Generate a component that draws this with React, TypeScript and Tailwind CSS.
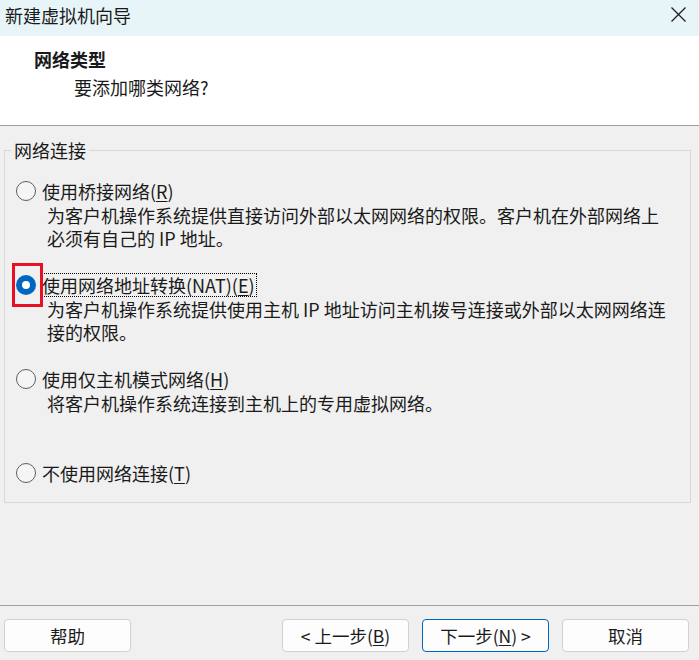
import { useState } from "react";

type Option = {
  id: string;
  label: string;
  key: string;
  desc: string[];
};

const options: Option[] = [
  {
    id: "bridge",
    label: "使用桥接网络",
    key: "R",
    desc: ["为客户机操作系统提供直接访问外部以太网网络的权限。客户机在外部网络上", "必须有自己的 IP 地址。"],
  },
  {
    id: "nat",
    label: "使用网络地址转换(NAT)",
    key: "E",
    desc: ["为客户机操作系统提供使用主机 IP 地址访问主机拨号连接或外部以太网网络连", "接的权限。"],
  },
  {
    id: "host",
    label: "使用仅主机模式网络",
    key: "H",
    desc: ["将客户机操作系统连接到主机上的专用虚拟网络。"],
  },
  { id: "none", label: "不使用网络连接", key: "T", desc: [] },
];

function Radio({ checked }: { checked: boolean }) {
  if (checked) {
    return (
      <span className="flex h-[20px] w-[20px] shrink-0 items-center justify-center rounded-full bg-[#0067c0]">
        <span className="h-[8px] w-[8px] rounded-full bg-white" />
      </span>
    );
  }
  return <span className="h-[20px] w-[20px] shrink-0 rounded-full border border-[#5f5f5f] bg-[#f5f5f5]" />;
}

function Btn({ children, primary }: { children: React.ReactNode; primary?: boolean }) {
  return (
    <button
      type="button"
      className={`h-[33px] w-[127px] rounded-[4px] border bg-[#fdfdfd] text-[17.5px] leading-[23px] text-[#1b1b1b] ${
        primary ? "border-[#0067c0]" : "border-[#d0d0d0]"
      }`}
    >
      {children}
    </button>
  );
}

export default function App() {
  const [selected, setSelected] = useState("nat");

  return (
    <div
      className="flex h-[660px] w-[699px] flex-col bg-[#f0f0f0] text-[#1a1a1a]"
      style={{ fontFamily: '"Noto Sans CJK SC", "Noto Sans", sans-serif' }}
    >
      <div className="flex h-[36px] shrink-0 items-start justify-between bg-[#e7f4f8] pl-[5px] pr-[13px]">
        <span className="pt-[4px] text-[18px] leading-[23px]">新建虚拟机向导</span>
        <svg width="15" height="15" viewBox="0 0 15 15" className="mt-[7px]">
          <path d="M0.5 0.5 L14.5 14.5 M14.5 0.5 L0.5 14.5" stroke="#1e1e1e" strokeWidth="1.3" fill="none" />
        </svg>
      </div>

      <div className="h-[90px] shrink-0 border-b border-[#a0a0a0] bg-white pl-[34px] pt-[12px]">
        <div className="text-[18px] font-bold leading-[23px]">网络类型</div>
        <div className="mt-[5px] pl-[40px] text-[18px] leading-[23px]">要添加哪类网络?</div>
      </div>

      <div className="flex-1 px-[4px] pt-[13px]">
        <fieldset className="w-[687px] border border-[#d8d8d8] pb-[18px] pl-[11px]">
          <legend className="ml-[-5px] px-[3px] text-[18px] leading-[23px]">网络连接</legend>
          <div className="flex flex-col gap-[23px] pt-[17px]">
            {options.map((o) => {
              const active = selected === o.id;
              return (
                <div key={o.id} onClick={() => setSelected(o.id)}>
                  <div className="flex h-[23px] items-center gap-[5px]">
                    <span className="relative flex">
                      <Radio checked={active} />
                      {o.id === "nat" && (
                        <span className="absolute left-[-4px] top-[-12px] h-[44px] w-[31px] border-[3px] border-[#e81123]" />
                      )}
                    </span>
                    <span
                      className={`text-[18px] leading-[22px] ${
                        active ? "border border-dotted border-black pr-[1px]" : "border border-transparent"
                      }`}
                    >
                      {o.label}(<span className="underline underline-offset-2">{o.key}</span>)
                    </span>
                  </div>
                  {o.id !== "none" && (
                    <div className="mt-[2px] h-[46px] pl-[31px] text-[18px] leading-[23px]">
                      {o.desc.map((d) => (
                        <div key={d}>{d}</div>
                      ))}
                    </div>
                  )}
                </div>
              );
            })}
          </div>
        </fieldset>
      </div>

      <div className="flex h-[55px] shrink-0 items-start justify-between border-t border-[#a0a0a0] pl-[4px] pr-[10px] pt-[13px]">
        <Btn>帮助</Btn>
        <div className="flex gap-[13px]">
          <Btn>
            &lt; 上一步(<span className="underline underline-offset-2">B</span>)
          </Btn>
          <Btn primary>
            下一步(<span className="underline underline-offset-2">N</span>) &gt;
          </Btn>
          <Btn>取消</Btn>
        </div>
      </div>
    </div>
  );
}
